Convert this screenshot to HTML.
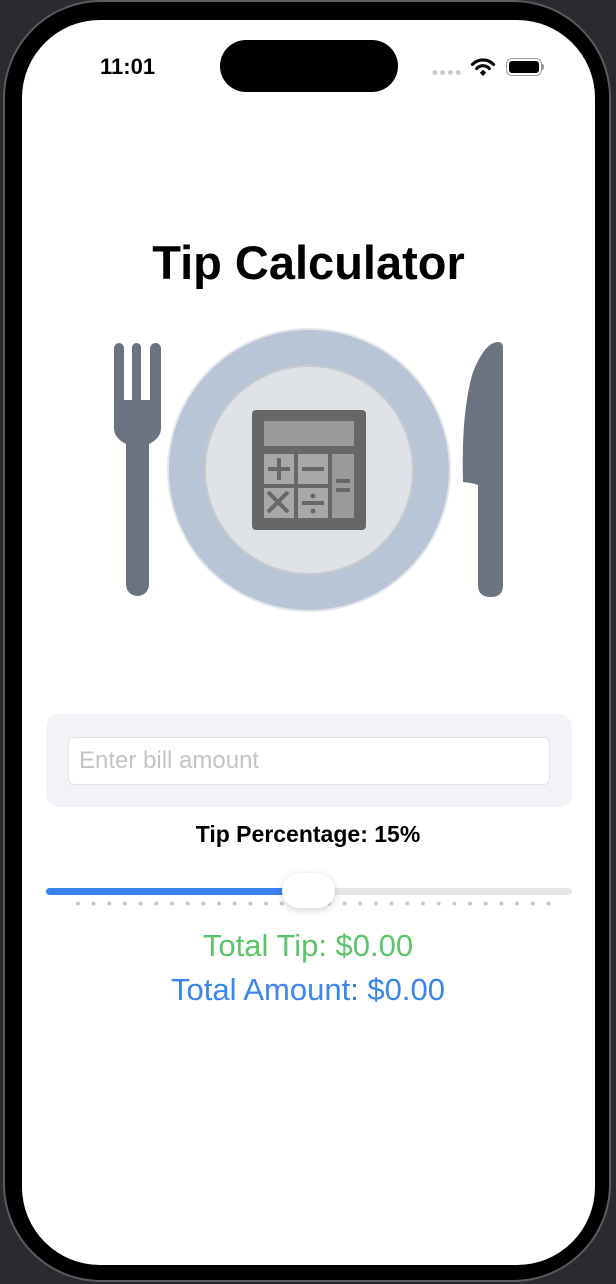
<!DOCTYPE html>
<html><head><meta charset="utf-8"><style>
html,body{margin:0;padding:0;background:#2a2b30;width:616px;height:1284px;overflow:hidden;font-family:"Liberation Sans",sans-serif}
.frame{position:absolute;left:5px;top:2px;width:604px;height:1278px;border-radius:96px;background:#000;box-shadow:0 0 0 2px #5a5b60}
.screen{position:absolute;left:22px;top:20px;width:573px;height:1245px;border-radius:78px;background:#fff;overflow:hidden}
.abs{position:absolute}
</style></head><body>
<div class="frame"></div>
<div class="screen">
 <div class="abs" style="left:78px;top:34px;font-size:22px;font-weight:bold;color:#000">11:01</div>
 <div class="abs" style="left:198px;top:20px;width:178px;height:52px;border-radius:26px;background:#000"></div>
 <div class="abs" style="left:409px;top:50px;width:31px;height:5px;background:radial-gradient(circle,#ccc 2.2px,transparent 2.6px) 0 0/7.75px 5px"></div>
 <svg class="abs" style="left:448px;top:37px" width="26" height="20" viewBox="0 0 24 19"><path d="M2 7a14 14 0 0 1 20 0" stroke="#000" stroke-width="3" fill="none" stroke-linecap="round"/><path d="M6 11a8 8 0 0 1 12 0" stroke="#000" stroke-width="3" fill="none" stroke-linecap="round"/><path d="M9 15l3-3 3 3-3 3z" fill="#000"/></svg>
 <div class="abs" style="left:484px;top:38px;width:36px;height:18px;border:1.5px solid #999;border-radius:6px;box-sizing:border-box;padding:2px"><div style="width:100%;height:100%;background:#000;border-radius:3px"></div></div>
 <div class="abs" style="left:520px;top:44px;width:2px;height:6px;background:#999;border-radius:0 2px 2px 0"></div>
 <div class="abs" style="left:0;width:573px;top:215px;text-align:center;font-size:47px;font-weight:bold;color:#000">Tip Calculator</div>
</div>
<svg class="abs" style="left:0;top:0" width="616" height="1284">
 <g fill="#6c7380">
  <rect x="114" y="343" width="10" height="90" rx="5"/>
  <rect x="132" y="343" width="9" height="70" rx="4.5"/>
  <rect x="150" y="343" width="11" height="90" rx="5.5"/>
  <path d="M114 400h47v28q0 10-12 16h-23q-12-6-12-16z"/>
  <rect x="126" y="430" width="23" height="166" rx="11.5"/>
  <path d="M498 342q5 0 5 6v237q0 12-12 12q-13 0-13-12v-100q-4-2-15-3q-2-70 10-110q12-30 25-30z"/>
 </g>
 <circle cx="309" cy="470" r="141" fill="#b8c5d6" stroke="#e4e6ea" stroke-width="2"/>
 <circle cx="309" cy="470" r="104" fill="#dfe2e7" stroke="#c8cacd" stroke-width="2"/>
 <rect x="252" y="410" width="114" height="120" rx="4" fill="#676767"/>
 <rect x="264" y="421" width="90" height="25" fill="#9a9a9a"/>
 <rect x="264" y="454" width="30" height="30" fill="#a8a8a8"/>
 <rect x="298" y="454" width="30" height="30" fill="#a8a8a8"/>
 <rect x="264" y="488" width="30" height="30" fill="#a8a8a8"/>
 <rect x="298" y="488" width="30" height="30" fill="#a8a8a8"/>
 <rect x="332" y="454" width="22" height="64" fill="#9a9a9a"/>
 <g stroke="#676767" stroke-width="4">
  <path d="M268 469h22M279 458v22M302 469h22M268 492l20 20M288 492l-20 20M302 503h22M336 481h14M336 490h14"/>
 </g>
 <circle cx="313" cy="496" r="2.5" fill="#676767"/><circle cx="313" cy="511" r="2.5" fill="#676767"/>
</svg>
<div class="abs" style="left:46px;top:714px;width:526px;height:93px;border-radius:13px;background:#f2f2f7"></div>
<div class="abs" style="left:68px;top:737px;width:482px;height:48px;border-radius:6px;background:#fff;border:1px solid #e2e2e6;box-sizing:border-box;font-size:24px;color:#c4c4c6;padding:9px 0 0 10px">Enter bill amount</div>
<div class="abs" style="left:0;width:616px;top:821px;text-align:center;font-size:23px;font-weight:bold;color:#000">Tip Percentage: 15%</div>
<div class="abs" style="left:46px;top:888px;width:526px;height:7px;border-radius:4px;background:#e6e6e8"></div>
<div class="abs" style="left:46px;top:888px;width:250px;height:7px;border-radius:4px;background:#3b82f0"></div>
<div class="abs" style="left:70px;top:901px;width:484px;height:5px;background:radial-gradient(circle,#c8c8ca 1.8px,transparent 2.2px) 0 0/15.7px 5px"></div>
<div class="abs" style="left:282px;top:873px;width:53px;height:35px;border-radius:18px;background:#fff;box-shadow:0 2px 8px rgba(0,0,0,.18)"></div>
<div class="abs" style="left:0;width:616px;top:928px;text-align:center;font-size:31px;color:#5cc46a">Total Tip: $0.00</div>
<div class="abs" style="left:0;width:616px;top:972px;text-align:center;font-size:31px;color:#3b86ec">Total Amount: $0.00</div>
</body></html>
